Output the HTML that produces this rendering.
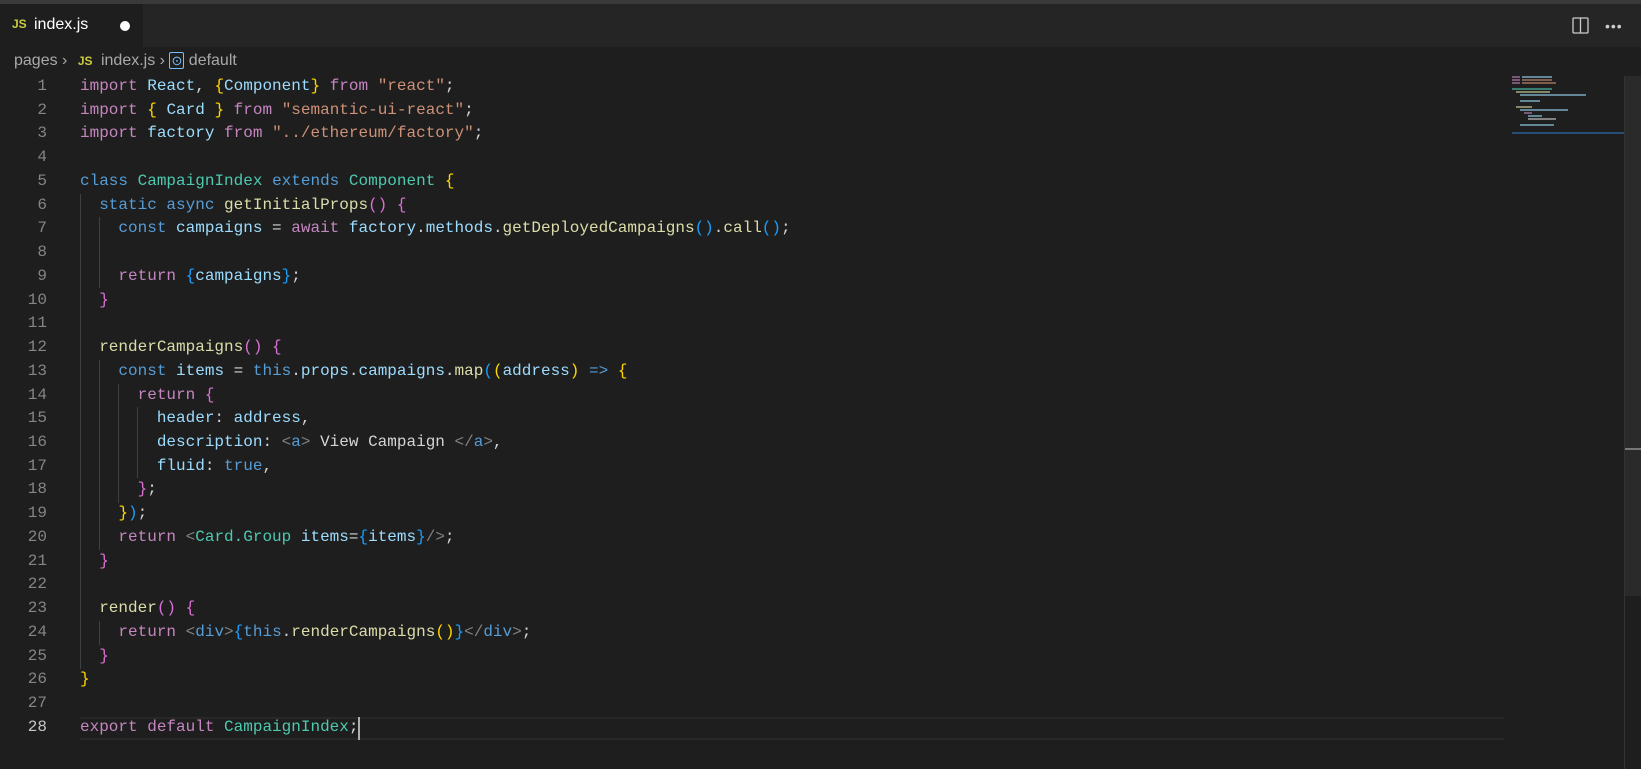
<!DOCTYPE html>
<html><head><meta charset="utf-8"><style>
*{margin:0;padding:0;box-sizing:border-box}
body{width:1641px;height:769px;background:#1e1e1e;overflow:hidden;position:relative;font-family:"Liberation Sans",sans-serif}
.top{position:absolute;left:0;top:0;width:1641px;height:4px;background:#3a3a3a}
.tabbar{position:absolute;left:0;top:4px;width:1641px;height:43px;background:#252526}
.tab{position:absolute;left:0;top:4px;width:143px;height:43px;background:#1e1e1e}
.js{color:#cbcb41;font-weight:bold;font-size:12px}
.code{position:absolute;left:80px;top:75px;font-family:"Liberation Mono",monospace;font-size:16px;line-height:23.73px;color:#d4d4d4;white-space:pre}
.nums{position:absolute;left:0;width:47px;top:75px;font-family:"Liberation Mono",monospace;font-size:16px;line-height:23.73px;color:#858585;text-align:right;white-space:pre}
.k{color:#c586c0}.b{color:#569cd6}.v{color:#9cdcfe}.s{color:#ce9178}.t{color:#4ec9b0}.f{color:#dcdcaa}.g{color:#808080}.y{color:#ffd700}.m{color:#da70d6}.c{color:#179fff}
.guide{position:absolute;width:1px;background:#404040}
</style></head><body>
<div class="top"></div>
<div class="tabbar"></div>
<div class="tab">
 <span class="js" style="position:absolute;left:12px;top:13px">JS</span>
 <span style="position:absolute;left:34px;top:12px;color:#fff;font-size:16px">index.js</span>
 <span style="position:absolute;left:120px;top:17px;width:10px;height:10px;border-radius:50%;background:#fff"></span>
</div>
<svg style="position:absolute;left:1572px;top:17px" width="17" height="17" viewBox="0 0 17 17"><rect x="1" y="1" width="15" height="15" rx="1" fill="none" stroke="#ccc" stroke-width="1.3"/><line x1="8.5" y1="1" x2="8.5" y2="16" stroke="#ccc" stroke-width="1.3"/></svg>
<div style="position:absolute;left:1605px;top:24px;color:#ccc;font-size:14px;letter-spacing:1px;line-height:4px">&#8226;&#8226;&#8226;</div>
<div style="position:absolute;left:14px;top:52px;font-size:16px;color:#a9a9a9;white-space:nowrap">pages <span style="color:#a9a9a9">&#8250;</span> <span class="js" style="margin-left:6px">JS</span> <span style="margin-left:4px">index.js</span> &#8250; <span style="color:#75beff;font-size:13px;border:1px solid #75beff;padding:0 1px;border-radius:2px">&#8857;</span> default</div>
<div class="guide" style="left:80px;top:194px;height:475px"></div>
<div class="guide" style="left:99px;top:217px;height:71px"></div>
<div class="guide" style="left:99px;top:360px;height:190px"></div>
<div class="guide" style="left:118px;top:384px;height:119px"></div>
<div class="guide" style="left:137px;top:407px;height:71px"></div>
<div class="guide" style="left:99px;top:621px;height:24px"></div>
<div style="position:absolute;left:80px;top:717px;width:1424px;height:23px;border-top:2px solid #282828;border-bottom:2px solid #282828"></div>
<div style="position:absolute;left:358px;top:717px;width:2px;height:23px;background:#aeafad"></div>
<div class="nums">1
2
3
4
5
6
7
8
9
10
11
12
13
14
15
16
17
18
19
20
21
22
23
24
25
26
27
<span style="color:#c6c6c6">28</span></div>
<div class="code"><span class="k">import</span> <span class="v">React</span>, <span class="y">{</span><span class="v">Component</span><span class="y">}</span> <span class="k">from</span> <span class="s">"react"</span>;
<span class="k">import</span> <span class="y">{</span> <span class="v">Card</span> <span class="y">}</span> <span class="k">from</span> <span class="s">"semantic-ui-react"</span>;
<span class="k">import</span> <span class="v">factory</span> <span class="k">from</span> <span class="s">"../ethereum/factory"</span>;

<span class="b">class</span> <span class="t">CampaignIndex</span> <span class="b">extends</span> <span class="t">Component</span> <span class="y">{</span>
  <span class="b">static</span> <span class="b">async</span> <span class="f">getInitialProps</span><span class="m">()</span> <span class="m">{</span>
    <span class="b">const</span> <span class="v">campaigns</span> = <span class="k">await</span> <span class="v">factory</span>.<span class="v">methods</span>.<span class="f">getDeployedCampaigns</span><span class="c">()</span>.<span class="f">call</span><span class="c">()</span>;

    <span class="k">return</span> <span class="c">{</span><span class="v">campaigns</span><span class="c">}</span>;
  <span class="m">}</span>

  <span class="f">renderCampaigns</span><span class="m">()</span> <span class="m">{</span>
    <span class="b">const</span> <span class="v">items</span> = <span class="b">this</span>.<span class="v">props</span>.<span class="v">campaigns</span>.<span class="f">map</span><span class="c">(</span><span class="y">(</span><span class="v">address</span><span class="y">)</span> <span class="b">=&gt;</span> <span class="y">{</span>
      <span class="k">return</span> <span class="m">{</span>
        <span class="v">header</span>: <span class="v">address</span>,
        <span class="v">description</span>: <span class="g">&lt;</span><span class="b">a</span><span class="g">&gt;</span> View Campaign <span class="g">&lt;/</span><span class="b">a</span><span class="g">&gt;</span>,
        <span class="v">fluid</span>: <span class="b">true</span>,
      <span class="m">}</span>;
    <span class="y">}</span><span class="c">)</span>;
    <span class="k">return</span> <span class="g">&lt;</span><span class="t">Card.Group</span> <span class="v">items</span>=<span class="c">{</span><span class="v">items</span><span class="c">}</span><span class="g">/&gt;</span>;
  <span class="m">}</span>

  <span class="f">render</span><span class="m">()</span> <span class="m">{</span>
    <span class="k">return</span> <span class="g">&lt;</span><span class="b">div</span><span class="g">&gt;</span><span class="c">{</span><span class="b">this</span>.<span class="f">renderCampaigns</span><span class="y">()</span><span class="c">}</span><span class="g">&lt;/</span><span class="b">div</span><span class="g">&gt;</span>;
  <span class="m">}</span>
<span class="y">}</span>

<span class="k">export</span> <span class="k">default</span> <span class="t">CampaignIndex</span>;</div>
<svg style="position:absolute;left:1512px;top:76px" width="112" height="58">
<g opacity="0.55">
<rect x="0" y="0" width="8" height="2" fill="#c586c0"/><rect x="10" y="0" width="30" height="2" fill="#9cdcfe"/><rect x="0" y="3" width="8" height="2" fill="#c586c0"/><rect x="10" y="3" width="30" height="2" fill="#ce9178"/><rect x="0" y="6" width="8" height="2" fill="#c586c0"/><rect x="10" y="6" width="34" height="2" fill="#ce9178"/>
<rect x="0" y="12" width="40" height="2" fill="#4ec9b0"/><rect x="4" y="15" width="34" height="2" fill="#dcdcaa"/><rect x="8" y="18" width="66" height="2" fill="#9cdcfe"/><rect x="8" y="24" width="20" height="2" fill="#9cdcfe"/>
<rect x="4" y="30" width="16" height="2" fill="#dcdcaa"/><rect x="8" y="33" width="48" height="2" fill="#9cdcfe"/><rect x="12" y="36" width="8" height="2" fill="#c586c0"/><rect x="16" y="39" width="14" height="2" fill="#9cdcfe"/><rect x="16" y="42" width="28" height="2" fill="#d4d4d4"/><rect x="8" y="48" width="34" height="2" fill="#9cdcfe"/>
</g><rect x="0" y="56" width="112" height="2" fill="#264f78"/></svg>
<div style="position:absolute;left:1624px;top:76px;width:17px;height:520px;background:#2a2a2a;border-left:1px solid #333"></div>
<div style="position:absolute;left:1624px;top:596px;width:1px;height:173px;background:#333"></div>
<div style="position:absolute;left:1625px;top:448px;width:16px;height:2px;background:#777"></div>
</body></html>
